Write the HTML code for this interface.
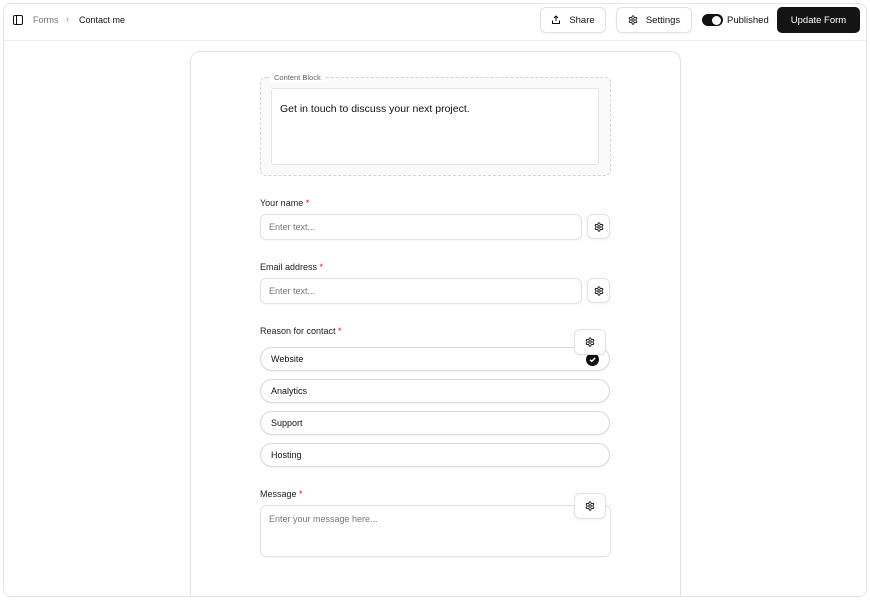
<!DOCTYPE html>
<html><head><meta charset="utf-8"><style>
*{box-sizing:border-box;margin:0;padding:0}
html,body{width:870px;height:600px;overflow:hidden}
body{background:#fff;font-family:"Liberation Sans",sans-serif;color:#111;position:relative}
.a{position:absolute}
.frame{left:3px;top:3px;width:864px;height:594px;border:1px solid #e5e5e5;border-radius:8px;overflow:hidden}
.hdr{left:0;top:0;width:862px;height:37px;border-bottom:1px solid #ececec}
.btn{border:1px solid #e2e2e2;border-radius:6px;background:#fff;font-size:9.5px;display:flex;align-items:center;justify-content:center;gap:8px;box-shadow:0 1px 2px rgba(0,0,0,.05)}
.lbl{font-size:9px;color:#222}
.lbl b{color:#e11;font-weight:normal}
.inp{border:1px solid #e3e3e3;border-radius:6px;font-size:9px;color:#777;padding-left:8px;display:flex;align-items:center;box-shadow:0 1px 1px rgba(0,0,0,.03)}
.gb{width:23px;height:25px;border:1px solid #e3e3e3;border-radius:6px;background:#fff;display:flex;align-items:center;justify-content:center;box-shadow:0 1px 2px rgba(0,0,0,.05)}
.opt{left:260px;width:350px;height:24px;border:1px solid #d8d8d8;border-radius:12px;font-size:9px;color:#111;padding-left:10px;display:flex;align-items:center;box-shadow:0 1px 1px rgba(0,0,0,.05)}
</style></head><body>
<svg width="0" height="0" style="position:absolute"><defs><g id="gear"><path d="M12.22 2h-.44a2 2 0 0 0-2 2v.18a2 2 0 0 1-1 1.73l-.43.25a2 2 0 0 1-2 0l-.15-.08a2 2 0 0 0-2.73.73l-.22.38a2 2 0 0 0 .73 2.73l.15.1a2 2 0 0 1 1 1.72v.51a2 2 0 0 1-1 1.74l-.15.09a2 2 0 0 0-.73 2.73l.22.38a2 2 0 0 0 2.73.73l.15-.08a2 2 0 0 1 2 0l.43.25a2 2 0 0 1 1 1.73V20a2 2 0 0 0 2 2h.44a2 2 0 0 0 2-2v-.18a2 2 0 0 1 1-1.73l.43-.25a2 2 0 0 1 2 0l.15.08a2 2 0 0 0 2.73-.73l.22-.39a2 2 0 0 0-.73-2.73l-.15-.08a2 2 0 0 1-1-1.74v-.5a2 2 0 0 1 1-1.74l.15-.09a2 2 0 0 0 .73-2.73l-.22-.38a2 2 0 0 0-2.73-.73l-.15.08a2 2 0 0 1-2 0l-.43-.25a2 2 0 0 1-1-1.73V4a2 2 0 0 0-2-2z" fill="none" stroke="#111" stroke-width="2.2"/><circle cx="12" cy="12" r="3" fill="none" stroke="#111" stroke-width="2.2"/></g></defs></svg>
<div class="a frame">
 <div class="a hdr">
  <svg class="a" style="left:9px;top:11px" width="10" height="10" viewBox="0 0 10 10"><rect x=".5" y=".5" width="9" height="9" rx="1.5" fill="none" stroke="#111"/><line x1="3.5" y1="1" x2="3.5" y2="9" stroke="#111"/></svg>
  <div class="a" style="left:29px;top:11px;font-size:9px;color:#777">Forms</div>
  <div class="a" style="left:62px;top:10px;font-size:9px;color:#888">›</div>
  <div class="a" style="left:75px;top:11px;font-size:9px;color:#111">Contact me</div>
  <div class="a btn" style="left:536px;top:3px;width:66px;height:26px"><svg width="10" height="10" viewBox="0 0 10 10"><path d="M5 6V1M3 3l2-2 2 2M1.5 5.5v3h7v-3" fill="none" stroke="#111"/></svg>Share</div>
  <div class="a btn" style="left:612px;top:3px;width:76px;height:26px"><svg width="10" height="10" viewBox="0 0 24 24"><use href="#gear"/></svg>Settings</div>
  <div class="a" style="left:698px;top:10px;width:21px;height:12px;border-radius:6px;background:#111"><div class="a" style="left:10px;top:1.5px;width:9px;height:9px;border-radius:50%;background:#fff"></div></div>
  <div class="a" style="left:723px;top:11px;font-size:9.5px">Published</div>
  <div class="a" style="left:773px;top:3px;width:83px;height:26px;background:#141414;color:#fff;border-radius:5px;font-size:9.5px;display:flex;align-items:center;justify-content:center">Update Form</div>
 </div>
 <div class="a" style="left:186px;top:47px;width:491px;height:560px;border:1px solid #e3e3e3;border-radius:10px"></div>
</div>
<div class="a" style="left:260px;top:77px;width:351px;height:99px;border:1px dashed #d6d6d6;border-radius:6px;background:#fafafa"></div>
<div class="a" style="left:270px;top:73px;padding:0 4px;background:#fff;font-size:7.5px;color:#666">Content Block</div>
<div class="a" style="left:271px;top:88px;width:328px;height:77px;border:1px solid #e5e5e5;border-radius:3px;background:#fff;font-size:10.5px;padding:14px 8px">Get in touch to discuss your next project.</div>

<div class="a lbl" style="left:260px;top:198px">Your name <b>*</b></div>
<div class="a inp" style="left:260px;top:214px;width:322px;height:26px">Enter text...</div>
<div class="a gb" style="left:587px;top:214px"><svg width="10" height="10" viewBox="0 0 24 24"><use href="#gear"/></svg></div>

<div class="a lbl" style="left:260px;top:262px">Email address <b>*</b></div>
<div class="a inp" style="left:260px;top:278px;width:322px;height:26px">Enter text...</div>
<div class="a gb" style="left:587px;top:278px"><svg width="10" height="10" viewBox="0 0 24 24"><use href="#gear"/></svg></div>

<div class="a lbl" style="left:260px;top:326px">Reason for contact <b>*</b></div>
<div class="a opt" style="top:347px">Website<div class="a" style="right:10px;top:5px;width:13px;height:13px;border-radius:50%;background:#111"><svg width="13" height="13" viewBox="0 0 13 13"><path d="M4 6.7l1.8 1.7 3.3-3.5" fill="none" stroke="#fff" stroke-width="1.4"/></svg></div></div>
<div class="a gb" style="left:574px;top:329px;width:32px;height:26px"><svg width="10" height="10" viewBox="0 0 24 24"><use href="#gear"/></svg></div>
<div class="a opt" style="top:379px">Analytics</div>
<div class="a opt" style="top:411px">Support</div>
<div class="a opt" style="top:443px">Hosting</div>

<div class="a lbl" style="left:260px;top:489px">Message <b>*</b></div>
<div class="a inp" style="left:260px;top:505px;width:351px;height:52px;align-items:flex-start;padding-top:8px">Enter your message here...</div>
<div class="a gb" style="left:574px;top:493px;width:32px;height:26px"><svg width="10" height="10" viewBox="0 0 24 24"><use href="#gear"/></svg></div>
</body></html>
